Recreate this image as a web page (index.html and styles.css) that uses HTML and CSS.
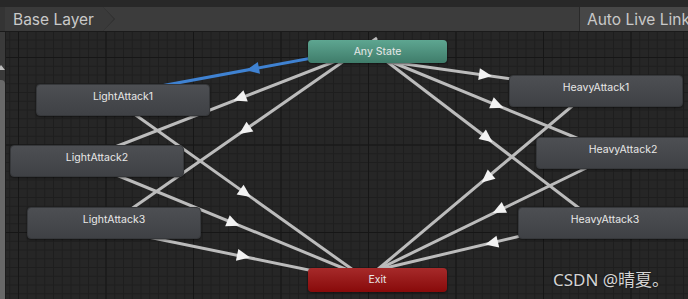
FILE: index.html
```html
<!DOCTYPE html>
<html>

<head>
    <meta name="viewport" content="width=device-width, initial-scale=1">
    <title>Animator</title>

    <link rel="stylesheet" href="styles.css">

</head>

<body>
    <div class="topstrip"></div>

    <div class="toolbar">
        <div class="crumb">Base Layer</div>
        <div class="spacer"></div>
        <div class="live">Auto Live Link</div>
    </div>

    <div class="graph">
        <svg class="wires" viewBox="0 32 688 267" width="688" height="267">
            <!-- any state to light attacks -->
            <line class="wire sel" x1="377" y1="46" x2="123" y2="93" />
            <line class="wire" x1="377" y1="45" x2="97" y2="154" />
            <line class="wire" x1="377" y1="38" x2="114" y2="221" />
            <!-- any state to heavy attacks -->
            <line class="wire" x1="377" y1="60" x2="596" y2="91" />
            <line class="wire" x1="377" y1="56" x2="623" y2="157" />
            <line class="wire" x1="377" y1="54" x2="605" y2="228" />
            <!-- to exit -->
            <line class="wire" x1="123" y1="106" x2="377" y2="287" />
            <line class="wire" x1="97" y1="167" x2="377" y2="282" />
            <line class="wire" x1="114" y1="230" x2="377" y2="284" />
            <line class="wire" x1="596" y1="86" x2="377" y2="270" />
            <line class="wire" x1="623" y1="150" x2="377" y2="270" />
            <line class="wire" x1="605" y1="216" x2="377" y2="270" />

            <polygon class="head sel" points="7,0 -6,-6 -6,6" transform="translate(253 69) rotate(169.5)" />
            <polygon class="head" points="7,0 -6,-6 -6,6" transform="translate(240 98) rotate(158.7)" />
            <polygon class="head" points="7,0 -6,-6 -6,6" transform="translate(245 130) rotate(145.2)" />
            <polygon class="head" points="7,0 -6,-6 -6,6" transform="translate(485 75) rotate(8.1)" />
            <polygon class="head" points="7,0 -6,-6 -6,6" transform="translate(497 105) rotate(22.3)" />
            <polygon class="head" points="7,0 -6,-6 -6,6" transform="translate(487 138) rotate(37.4)" />
            <polygon class="head" points="7,0 -6,-6 -6,6" transform="translate(245 193) rotate(35.5)" />
            <polygon class="head" points="7,0 -6,-6 -6,6" transform="translate(233 223) rotate(22.3)" />
            <polygon class="head" points="7,0 -6,-6 -6,6" transform="translate(243 256) rotate(11.6)" />
            <polygon class="head" points="7,0 -6,-6 -6,6" transform="translate(487 178) rotate(140)" />
            <polygon class="head" points="7,0 -6,-6 -6,6" transform="translate(499 210) rotate(154)" />
            <polygon class="head" points="7,0 -6,-6 -6,6" transform="translate(492 243) rotate(166.7)" />
        </svg>

        <div class="node any">Any State</div>
        <div class="node exit">Exit</div>

        <div class="node state la1">LightAttack1</div>
        <div class="node state la2">LightAttack2</div>
        <div class="node state la3">LightAttack3</div>

        <div class="node state ha1">HeavyAttack1</div>
        <div class="node state ha2">HeavyAttack2</div>
        <div class="node state ha3">HeavyAttack3</div>

        <div class="scroll">
            <span class="up"></span>
            <div class="thumb"></div>
        </div>

        <div class="mark">CSDN @晴夏。</div>
    </div>
</body>

</html>
```

FILE: styles.css
```css
body {
    margin: 0;
    width: 688px;
    height: 299px;
    overflow: hidden;
    background-color: #202020;
    font-family: Inter, "Noto Sans", sans-serif;
}

.topstrip {
    height: 7px;
    background-color: #282828;
}

.toolbar {
    display: flex;
    height: 24px;
    background-color: #3c3c3c;
    border-bottom: 1px solid #1a1a1a;
}

.crumb {
    position: relative;
    display: flex;
    align-items: center;
    width: 90px;
    padding-left: 8px;
    border-left: 5px solid #343434;
    color: #c9c9c9;
    font-size: 15.5px;
    background-color: #3a3a3a;
    white-space: nowrap;
}

/* breadcrumb chevron */
.crumb:after {
    content: "";
    position: absolute;
    right: -12px;
    top: 0;
    width: 0;
    height: 0;
    border-top: 12px solid transparent;
    border-bottom: 12px solid transparent;
    border-left: 12px solid #2a2a2a;
}

.crumb:before {
    content: "";
    position: absolute;
    right: -11px;
    top: 0;
    width: 0;
    height: 0;
    border-top: 12px solid transparent;
    border-bottom: 12px solid transparent;
    border-left: 11px solid #3a3a3a;
    z-index: 1;
}

.spacer {
    flex: 1;
}

.live {
    display: flex;
    align-items: center;
    width: 101px;
    padding-left: 7px;
    border-left: 1px solid #2a2a2a;
    background-color: #474747;
    color: #c9c9c9;
    font-size: 15.5px;
    white-space: nowrap;
    overflow: hidden;
}

.graph {
    position: relative;
    height: 267px;
    background-color: #262626;
    background-image:
        linear-gradient(to right, #161616 1px, transparent 1px),
        linear-gradient(to bottom, #161616 1px, transparent 1px),
        linear-gradient(to right, #1e1e1e 1px, transparent 1px),
        linear-gradient(to bottom, #1e1e1e 1px, transparent 1px);
    background-size: 87.5px 87.5px, 87.5px 87.5px, 8.75px 8.75px, 8.75px 8.75px;
    background-position: 18px 25px, 18px 25px, 18px 25px, 18px 25px;
}

.wires {
    position: absolute;
    left: 0;
    top: 0;
}

.wire {
    stroke: #bcbcbc;
    stroke-width: 3;
}

.wire.sel {
    stroke: #3f82d2;
}

.head {
    fill: #f2f2f2;
}

.head.sel {
    fill: #3f82d2;
}

.node {
    position: absolute;
    box-sizing: border-box;
    width: 139px;
    border-radius: 4px;
    color: #e8e8e8;
    font-size: 10.5px;
    text-align: center;
    box-shadow: 0 1px 2px rgba(0, 0, 0, 0.5);
}

.node.state {
    width: 174px;
    height: 32px;
    padding-top: 5px;
    line-height: 14px;
    background: linear-gradient(to bottom, #4d4f53, #3f4145);
    border: 1px solid #36383b;
}

.any {
    left: 308px;
    top: 8px;
    height: 23px;
    line-height: 23px;
    background: linear-gradient(to bottom, #5ea691, #3f7c6a);
}

.exit {
    left: 308px;
    top: 236px;
    height: 24px;
    line-height: 24px;
    background: linear-gradient(to bottom, #a62a2a, #880a0a);
}

.la1 {
    left: 36px;
    top: 52px;
}

.la2 {
    left: 10px;
    top: 113px;
}

.la3 {
    left: 27px;
    top: 175px;
}

.ha1 {
    left: 509px;
    top: 43px;
}

.ha2 {
    left: 536px;
    top: 105px;
}

.ha3 {
    left: 518px;
    top: 175px;
}

/* left scrollbar sitting over the graph */
.scroll {
    position: absolute;
    left: 0;
    top: 0;
    bottom: 0;
    width: 5px;
    background-color: #3a3a3a;
    border-right: 1px solid #1c1c1c;
    overflow: hidden;
}

.scroll .up {
    display: block;
    width: 0;
    height: 0;
    margin-top: 33px;
    margin-left: -3px;
    border-left: 4px solid transparent;
    border-right: 4px solid transparent;
    border-bottom: 5px solid #bdbdbd;
}

.scroll .thumb {
    position: absolute;
    left: 0;
    top: 48px;
    bottom: 0;
    width: 5px;
    border-radius: 0 4px 0 0;
    background-color: #686868;
}

.mark {
    position: absolute;
    left: 553px;
    top: 234px;
    color: #d4d4d4;
    font-family: "Noto Sans", "Noto Sans CJK SC", sans-serif;
    font-size: 17px;
    text-shadow: 0 0 2px rgba(0, 0, 0, 0.6);
}
```
